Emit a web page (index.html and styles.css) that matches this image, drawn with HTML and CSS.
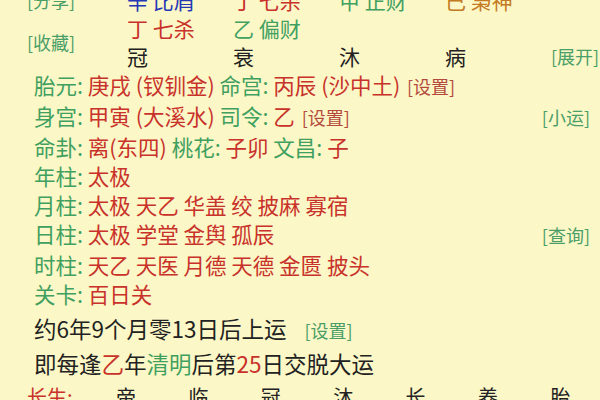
FILE: index.html
```html
<!DOCTYPE html>
<html lang="zh">
<head>
<meta charset="utf-8">
<link rel="stylesheet" href="styles.css">
</head>
<body>
<div class="page">
  <div class="top">
    <div class="link side r1">[分享]</div>
    <div class="link side r2">[收藏]</div>
    <div class="cell c1 blue">辛 比肩</div>
    <div class="cell c2 red">丁 七杀</div>
    <div class="cell c3 green">甲 正财</div>
    <div class="cell c4 orange">己 枭神</div>
    <div class="cell c1 red">丁 七杀</div>
    <div class="cell c2 green">乙 偏财</div>
    <div class="cell c3"></div>
    <div class="cell c4"></div>
    <div class="cell c1 dark">冠</div>
    <div class="cell c2 dark">衰</div>
    <div class="cell c3 dark">沐</div>
    <div class="cell c4 dark">病</div>
    <div class="link right r3">[展开]</div>
  </div>

  <div class="info">
    <div class="row"><span class="txt"><span class="lab">胎元:</span> <span class="val">庚戌 (钗钏金)</span> <span class="lab">命宫:</span> <span class="val">丙辰 (沙中土)</span> <span class="set">[设置]</span></span></div>
    <div class="row"><span class="txt"><span class="lab">身宫:</span> <span class="val">甲寅 (大溪水)</span> <span class="lab">司令:</span> <span class="val">乙</span> <span class="set">[设置]</span></span><span class="link">[小运]</span></div>
    <div class="row"><span class="txt"><span class="lab">命卦:</span> <span class="val">离(东四)</span> <span class="lab">桃花:</span> <span class="val">子卯</span> <span class="lab">文昌:</span> <span class="val">子</span></span></div>
    <div class="row"><span class="txt"><span class="lab">年柱:</span> <span class="val">太极</span></span></div>
    <div class="row"><span class="txt"><span class="lab">月柱:</span> <span class="val">太极 天乙 华盖 绞 披麻 寡宿</span></span></div>
    <div class="row"><span class="txt"><span class="lab">日柱:</span> <span class="val">太极 学堂 金舆 孤辰</span></span><span class="link">[查询]</span></div>
    <div class="row"><span class="txt"><span class="lab">时柱:</span> <span class="val">天乙 天医 月德 天德 金匮 披头</span></span></div>
    <div class="row"><span class="txt"><span class="lab">关卡:</span> <span class="val">百日关</span></span></div>
  </div>

  <div class="luck">
    <div class="line"><span>约6年9个月零13日后上运</span><span class="link go">[设置]</span></div>
    <div class="line"><span>即每逢<span class="red">乙</span>年<span class="green">清明</span>后第<span class="red">25</span>日交脱大运</span></div>
  </div>

  <div class="life">
    <span class="lifelab">长生:</span>
    <span>帝</span><span>临</span><span>冠</span><span>沐</span><span>长</span><span>养</span><span>胎</span>
  </div>
</div>
</body>
</html>
```
FILE: styles.css
```css
html, body {
  margin: 0;
  padding: 0;
  background: #fcf7c6;
}
body {
  width: 600px;
  height: 400px;
  overflow: hidden;
  font-family: "Noto Sans CJK SC", "Noto Sans", sans-serif;
  color: #222;
}
.page {
  margin-top: -14px;
}
.blue { color: #2438b6; }
.red { color: #c8322b; }
.green { color: #40a060; }
.orange { color: #c47a22; }
.dark { color: #222; }

.link {
  color: #4a9e68;
  font-size: 18px;
  white-space: nowrap;
}

.top {
  display: grid;
  grid-template-columns: 127px 106px 106px 106px 106px 1fr;
  grid-template-rows: 28px 28px 28px;
  font-size: 21px;
  line-height: 28px;
}
.top .cell { white-space: nowrap; }
.top .c1 { grid-column: 2; }
.top .c2 { grid-column: 3; }
.top .c3 { grid-column: 4; }
.top .c4 { grid-column: 5; }
.side {
  grid-column: 1;
  padding-left: 27px;
}
.side.r1 { grid-row: 1; }
.side.r2 { grid-row: 2 / span 2; align-self: center; }
.right.r3 {
  grid-column: 6;
  grid-row: 3;
  justify-self: end;
  padding-right: 10px;
}

.info {
  padding: 0 10px 0 34px;
  font-size: 21.5px;
  line-height: 29px;
}
.row {
  display: flex;
  justify-content: space-between;
  align-items: baseline;
}
.txt { white-space: nowrap; }
.lab { color: #40a060; }
.val { color: #c8322b; }
.set {
  color: #b44a3e;
  font-size: 18px;
  margin-left: 2px;
}

.luck {
  margin-top: 4px;
  padding-left: 34px;
  font-size: 22.5px;
  line-height: 33px;
  color: #222;
}
.line {
  display: flex;
  align-items: baseline;
  white-space: nowrap;
}
.go { margin-left: 18px; }

.life {
  display: grid;
  grid-template-columns: 89px repeat(7, 72.4px);
  padding-left: 27px;
  font-size: 20px;
  line-height: 33px;
  color: #222;
}
.lifelab { color: #c8322b; }
```
